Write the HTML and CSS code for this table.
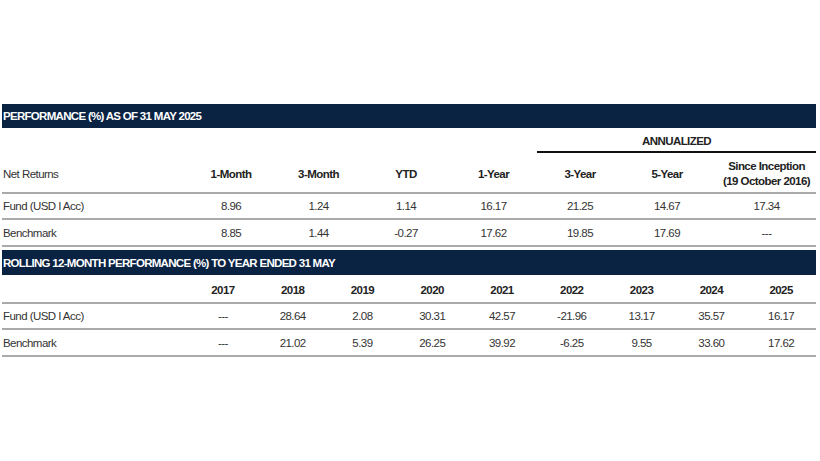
FILE: index.html
```html
<!DOCTYPE html>
<html lang="en">
<head>
<meta charset="utf-8">
<title>Performance</title>
<link rel="stylesheet" href="styles.css">
</head>
<body>
<div class="page">
  <section class="block">
    <div class="bar">PERFORMANCE (%) AS OF 31 MAY 2025</div>
    <div class="row perf annual-row">
      <div class="annual">ANNUALIZED</div>
    </div>
    <div class="row perf head line">
      <div class="label">Net Returns</div>
      <div class="c b">1-Month</div>
      <div class="c b">3-Month</div>
      <div class="c b">YTD</div>
      <div class="c b">1-Year</div>
      <div class="c b">3-Year</div>
      <div class="c b">5-Year</div>
      <div class="c b last">Since Inception<br>(19 October 2016)</div>
    </div>
    <div class="row perf data line">
      <div class="label">Fund (USD I Acc)</div>
      <div class="c">8.96</div>
      <div class="c">1.24</div>
      <div class="c">1.14</div>
      <div class="c">16.17</div>
      <div class="c">21.25</div>
      <div class="c">14.67</div>
      <div class="c last">17.34</div>
    </div>
    <div class="row perf data tall line">
      <div class="label">Benchmark</div>
      <div class="c">8.85</div>
      <div class="c">1.44</div>
      <div class="c">-0.27</div>
      <div class="c">17.62</div>
      <div class="c">19.85</div>
      <div class="c">17.69</div>
      <div class="c last">---</div>
    </div>
  </section>

  <section class="block second">
    <div class="bar">ROLLING 12-MONTH PERFORMANCE (%) TO YEAR ENDED 31 MAY</div>
    <div class="row roll data tall line years">
      <div class="label"></div>
      <div class="c b">2017</div>
      <div class="c b">2018</div>
      <div class="c b">2019</div>
      <div class="c b">2020</div>
      <div class="c b">2021</div>
      <div class="c b">2022</div>
      <div class="c b">2023</div>
      <div class="c b">2024</div>
      <div class="c b">2025</div>
    </div>
    <div class="row roll data line">
      <div class="label">Fund (USD I Acc)</div>
      <div class="c">---</div>
      <div class="c">28.64</div>
      <div class="c">2.08</div>
      <div class="c">30.31</div>
      <div class="c">42.57</div>
      <div class="c">-21.96</div>
      <div class="c">13.17</div>
      <div class="c">35.57</div>
      <div class="c">16.17</div>
    </div>
    <div class="row roll data tall line">
      <div class="label">Benchmark</div>
      <div class="c">---</div>
      <div class="c">21.02</div>
      <div class="c">5.39</div>
      <div class="c">26.25</div>
      <div class="c">39.92</div>
      <div class="c">-6.25</div>
      <div class="c">9.55</div>
      <div class="c">33.60</div>
      <div class="c">17.62</div>
    </div>
  </section>
</div>
</body>
</html>
```

FILE: styles.css
```css
html, body {
  margin: 0;
  padding: 0;
  background: #ffffff;
}

body {
  font-family: "Liberation Sans", Arial, sans-serif;
  font-size: 11.5px;
  letter-spacing: -0.55px;
  color: #333333;
}

.page {
  width: 814px;
  padding: 104px 0 0 2px;
}

.bar {
  height: 24px;
  background: #0b2343;
  color: #ffffff;
  font-weight: bold;
  display: flex;
  align-items: center;
  padding-left: 1px;
  letter-spacing: -0.7px;
}

.second {
  margin-top: 3px;
}

.second .bar {
  height: 25px;
}

.row {
  display: grid;
  align-items: center;
}

.perf {
  grid-template-columns: 185px 88px 87px 88px 87px 86px 88px 105px;
}

.roll {
  grid-template-columns: 186px repeat(9, 1fr);
}

.line {
  border-bottom: 2px solid #aaaaaa;
}

.annual-row {
  height: 25px;
}

.annual {
  grid-column: 6 / 9;
  align-self: stretch;
  display: flex;
  align-items: center;
  justify-content: center;
  border-bottom: 2px solid #111111;
  font-weight: bold;
  color: #222222;
  padding-top: 2px;
}

.head {
  height: 36px;
  padding-top: 3px;
  line-height: 15px;
}

.data {
  height: 24px;
}

.data.tall {
  height: 25px;
}

.years {
  padding-top: 2px;
  height: 23px;
}

.label {
  padding-left: 1px;
}

.c {
  text-align: center;
}

.b {
  font-weight: bold;
  color: #222222;
}

.last {
  padding-left: 6px;
}
```
